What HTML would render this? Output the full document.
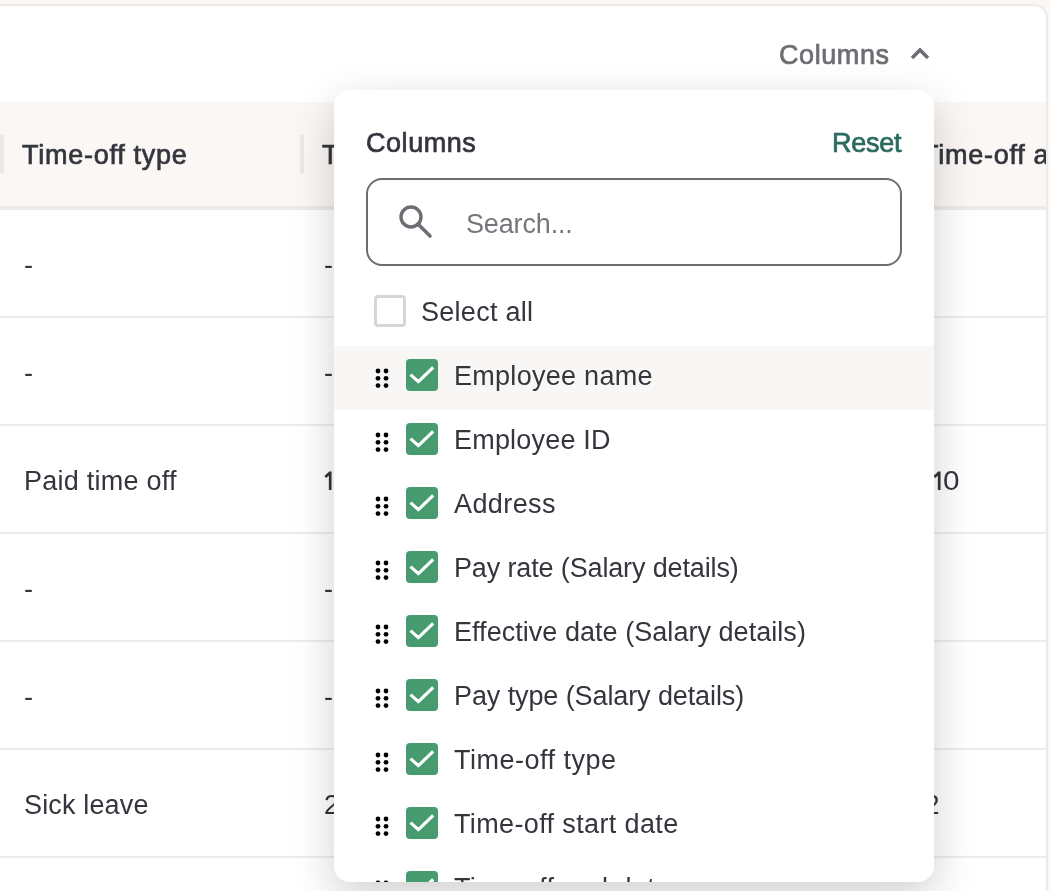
<!DOCTYPE html>
<html><head><meta charset="utf-8">
<style>
html,body{margin:0;padding:0;}
body{width:1050px;height:891px;overflow:hidden;position:relative;background:#faf7f4;font-family:"Liberation Sans",sans-serif;color:#34363d;}
.abs{position:absolute;}
.t{position:absolute;font-size:27px;line-height:29px;white-space:nowrap;}
.card{position:absolute;left:-20px;top:4px;width:1064px;height:900px;background:#fff;border:2px solid #ecebe6;border-radius:14px;}
.hdr{position:absolute;left:0;top:102px;width:1046px;height:104px;background:#faf7f5;}
.hdrb{position:absolute;left:0;top:206px;width:1046px;height:4px;background:#ecebe6;}
.rowb{position:absolute;left:0;width:1046px;height:2px;background:#efede8;}
.div{position:absolute;top:134px;width:4px;height:40px;border-radius:2px;background:#ebe9e4;}
.sb{font-weight:400;letter-spacing:0.73px;-webkit-text-stroke:0.7px currentColor;}
.pop{position:absolute;left:334px;top:90px;width:600px;height:792px;background:#fff;border-radius:16px;box-shadow:0 14px 44px rgba(0,0,0,0.19);overflow:hidden;}
.item{position:absolute;left:0;width:600px;height:64px;}
.dots{position:absolute;left:40px;top:22px;width:16px;height:21px;}
.cb{position:absolute;left:72px;top:13px;width:32px;height:32px;border-radius:4px;background:#489b6e;}
.lbl{position:absolute;left:120px;top:16px;font-size:27px;line-height:29px;white-space:nowrap;}
</style></head><body><div id="root" style="position:absolute;left:0;top:0;width:1050px;height:891px;will-change:transform;">
<div class="card"></div>
<div class="abs" style="left:0;top:0;width:1046px;height:891px;overflow:hidden">
<div class="hdr"></div>
<div class="hdrb"></div>

<div class="t sb" style="left:779px;top:41px;color:#6c6e73;letter-spacing:0.58px">Columns</div>
<svg class="abs" style="left:908px;top:44px" width="24" height="18" viewBox="0 0 24 18"><path d="M4 14 L12 6 L20 14" fill="none" stroke="#6c6e73" stroke-width="3.6"/></svg>

<div class="div" style="left:0"></div>
<div class="div" style="left:300px"></div>
<div class="div" style="left:600px"></div>
<div class="div" style="left:900px"></div>
<div class="t sb" style="left:22px;top:141px;">Time-off type</div>
<div class="t sb" style="left:322px;top:141px;">Time-off start date</div>
<div class="t sb" style="left:622px;top:141px;">Time-off end date</div>
<div class="t sb" style="left:922px;top:141px;">Time-off amount</div>

<div class="rowb" style="top:316px"></div>
<div class="rowb" style="top:424px"></div>
<div class="rowb" style="top:532px"></div>
<div class="rowb" style="top:640px"></div>
<div class="rowb" style="top:748px"></div>
<div class="rowb" style="top:856px"></div>

<div class="t" style="left:24px;top:251px;">-</div>
<div class="t" style="left:324px;top:251px;">-</div>
<div class="t" style="left:24px;top:359px;">-</div>
<div class="t" style="left:324px;top:359px;">-</div>
<div class="t" style="left:24px;top:467px;letter-spacing:0.25px">Paid time off</div>
<svg class="abs" style="left:323.5px;top:471px" width="12" height="22" viewBox="0 0 12 22"><path d="M1.3 6.1 L6.2 1.5 M6.2 0.6 L6.2 19" fill="none" stroke="#34363d" stroke-width="2.7" stroke-linecap="butt" stroke-linejoin="round"/></svg>
<svg class="abs" style="left:932.8px;top:471px" width="12" height="22" viewBox="0 0 12 22"><path d="M1.3 6.1 L6.2 1.5 M6.2 0.6 L6.2 19" fill="none" stroke="#34363d" stroke-width="2.7" stroke-linecap="butt" stroke-linejoin="round"/></svg>
<div class="t" style="left:943px;top:467px;transform:scaleX(1.1);transform-origin:0 0">0</div>
<div class="t" style="left:24px;top:575px;">-</div>
<div class="t" style="left:324px;top:575px;">-</div>
<div class="t" style="left:24px;top:683px;">-</div>
<div class="t" style="left:324px;top:683px;">-</div>
<div class="t" style="left:24px;top:791px;letter-spacing:0.15px">Sick leave</div>
<div class="t" style="left:324px;top:791px;">2/1/2024</div>
<div class="t" style="left:924.5px;top:791px;">2</div>

</div>
<div class="pop">
  <div class="t sb" style="left:32px;top:39px;letter-spacing:0.55px">Columns</div>
  <div class="t sb" style="left:498px;top:39px;color:#2a6b5e;letter-spacing:-0.25px">Reset</div>
  <div class="abs" style="left:32px;top:88px;width:532px;height:84px;border:2px solid #6c6e73;border-radius:16px;"></div>
  <svg class="abs" style="left:62px;top:114px" width="40" height="36" viewBox="0 0 40 36"><circle cx="15" cy="13" r="10" fill="none" stroke="#6c6e73" stroke-width="3.4"/><path d="M22 20 L34 32" stroke="#6c6e73" stroke-width="3.6" stroke-linecap="round"/></svg>
  <div class="t" style="left:132px;top:120px;color:#76777c;letter-spacing:-0.15px">Search...</div>
  <div class="abs" style="left:40px;top:205px;width:26px;height:26px;border:3px solid #d6d6d6;border-radius:4px;"></div>
  <div class="t" style="left:87px;top:208px;letter-spacing:0.28px">Select all</div>
  <div class="abs" style="left:0;top:256px;width:600px;height:64px;background:#f9f7f5;"></div>
  <!--ITEMS--><div class="item" style="top:256px"><svg class="dots" width="16" height="21" viewBox="0 0 16 21"><g fill="#000"><circle cx="4" cy="3" r="2.4"/><circle cx="12" cy="3" r="2.4"/><circle cx="4" cy="10.3" r="2.4"/><circle cx="12" cy="10.3" r="2.4"/><circle cx="4" cy="17.6" r="2.4"/><circle cx="12" cy="17.6" r="2.4"/></g></svg><svg class="cb" width="32" height="32" viewBox="0 0 32 32"><path d="M4.5 15.6 L12.4 22.6 L27.2 8.4" fill="none" stroke="#fff" stroke-width="3.2"/></svg><div class="lbl" style="letter-spacing:0.28px">Employee name</div></div>
  <div class="item" style="top:320px"><svg class="dots" width="16" height="21" viewBox="0 0 16 21"><g fill="#000"><circle cx="4" cy="3" r="2.4"/><circle cx="12" cy="3" r="2.4"/><circle cx="4" cy="10.3" r="2.4"/><circle cx="12" cy="10.3" r="2.4"/><circle cx="4" cy="17.6" r="2.4"/><circle cx="12" cy="17.6" r="2.4"/></g></svg><svg class="cb" width="32" height="32" viewBox="0 0 32 32"><path d="M4.5 15.6 L12.4 22.6 L27.2 8.4" fill="none" stroke="#fff" stroke-width="3.2"/></svg><div class="lbl" style="letter-spacing:0.2px">Employee ID</div></div>
  <div class="item" style="top:384px"><svg class="dots" width="16" height="21" viewBox="0 0 16 21"><g fill="#000"><circle cx="4" cy="3" r="2.4"/><circle cx="12" cy="3" r="2.4"/><circle cx="4" cy="10.3" r="2.4"/><circle cx="12" cy="10.3" r="2.4"/><circle cx="4" cy="17.6" r="2.4"/><circle cx="12" cy="17.6" r="2.4"/></g></svg><svg class="cb" width="32" height="32" viewBox="0 0 32 32"><path d="M4.5 15.6 L12.4 22.6 L27.2 8.4" fill="none" stroke="#fff" stroke-width="3.2"/></svg><div class="lbl" style="letter-spacing:0.4px">Address</div></div>
  <div class="item" style="top:448px"><svg class="dots" width="16" height="21" viewBox="0 0 16 21"><g fill="#000"><circle cx="4" cy="3" r="2.4"/><circle cx="12" cy="3" r="2.4"/><circle cx="4" cy="10.3" r="2.4"/><circle cx="12" cy="10.3" r="2.4"/><circle cx="4" cy="17.6" r="2.4"/><circle cx="12" cy="17.6" r="2.4"/></g></svg><svg class="cb" width="32" height="32" viewBox="0 0 32 32"><path d="M4.5 15.6 L12.4 22.6 L27.2 8.4" fill="none" stroke="#fff" stroke-width="3.2"/></svg><div class="lbl" style="letter-spacing:-0.14px">Pay rate (Salary details)</div></div>
  <div class="item" style="top:512px"><svg class="dots" width="16" height="21" viewBox="0 0 16 21"><g fill="#000"><circle cx="4" cy="3" r="2.4"/><circle cx="12" cy="3" r="2.4"/><circle cx="4" cy="10.3" r="2.4"/><circle cx="12" cy="10.3" r="2.4"/><circle cx="4" cy="17.6" r="2.4"/><circle cx="12" cy="17.6" r="2.4"/></g></svg><svg class="cb" width="32" height="32" viewBox="0 0 32 32"><path d="M4.5 15.6 L12.4 22.6 L27.2 8.4" fill="none" stroke="#fff" stroke-width="3.2"/></svg><div class="lbl" style="letter-spacing:0.04px">Effective date (Salary details)</div></div>
  <div class="item" style="top:576px"><svg class="dots" width="16" height="21" viewBox="0 0 16 21"><g fill="#000"><circle cx="4" cy="3" r="2.4"/><circle cx="12" cy="3" r="2.4"/><circle cx="4" cy="10.3" r="2.4"/><circle cx="12" cy="10.3" r="2.4"/><circle cx="4" cy="17.6" r="2.4"/><circle cx="12" cy="17.6" r="2.4"/></g></svg><svg class="cb" width="32" height="32" viewBox="0 0 32 32"><path d="M4.5 15.6 L12.4 22.6 L27.2 8.4" fill="none" stroke="#fff" stroke-width="3.2"/></svg><div class="lbl" style="letter-spacing:-0.1px">Pay type (Salary details)</div></div>
  <div class="item" style="top:640px"><svg class="dots" width="16" height="21" viewBox="0 0 16 21"><g fill="#000"><circle cx="4" cy="3" r="2.4"/><circle cx="12" cy="3" r="2.4"/><circle cx="4" cy="10.3" r="2.4"/><circle cx="12" cy="10.3" r="2.4"/><circle cx="4" cy="17.6" r="2.4"/><circle cx="12" cy="17.6" r="2.4"/></g></svg><svg class="cb" width="32" height="32" viewBox="0 0 32 32"><path d="M4.5 15.6 L12.4 22.6 L27.2 8.4" fill="none" stroke="#fff" stroke-width="3.2"/></svg><div class="lbl" style="letter-spacing:0.5px">Time-off type</div></div>
  <div class="item" style="top:704px"><svg class="dots" width="16" height="21" viewBox="0 0 16 21"><g fill="#000"><circle cx="4" cy="3" r="2.4"/><circle cx="12" cy="3" r="2.4"/><circle cx="4" cy="10.3" r="2.4"/><circle cx="12" cy="10.3" r="2.4"/><circle cx="4" cy="17.6" r="2.4"/><circle cx="12" cy="17.6" r="2.4"/></g></svg><svg class="cb" width="32" height="32" viewBox="0 0 32 32"><path d="M4.5 15.6 L12.4 22.6 L27.2 8.4" fill="none" stroke="#fff" stroke-width="3.2"/></svg><div class="lbl" style="letter-spacing:0.37px">Time-off start date</div></div>
  <div class="item" style="top:768px"><svg class="dots" width="16" height="21" viewBox="0 0 16 21"><g fill="#000"><circle cx="4" cy="3" r="2.4"/><circle cx="12" cy="3" r="2.4"/><circle cx="4" cy="10.3" r="2.4"/><circle cx="12" cy="10.3" r="2.4"/><circle cx="4" cy="17.6" r="2.4"/><circle cx="12" cy="17.6" r="2.4"/></g></svg><svg class="cb" width="32" height="32" viewBox="0 0 32 32"><path d="M4.5 15.6 L12.4 22.6 L27.2 8.4" fill="none" stroke="#fff" stroke-width="3.2"/></svg><div class="lbl" style="letter-spacing:0.37px">Time-off end date</div></div><!--/ITEMS-->
</div>
</div></body></html>
